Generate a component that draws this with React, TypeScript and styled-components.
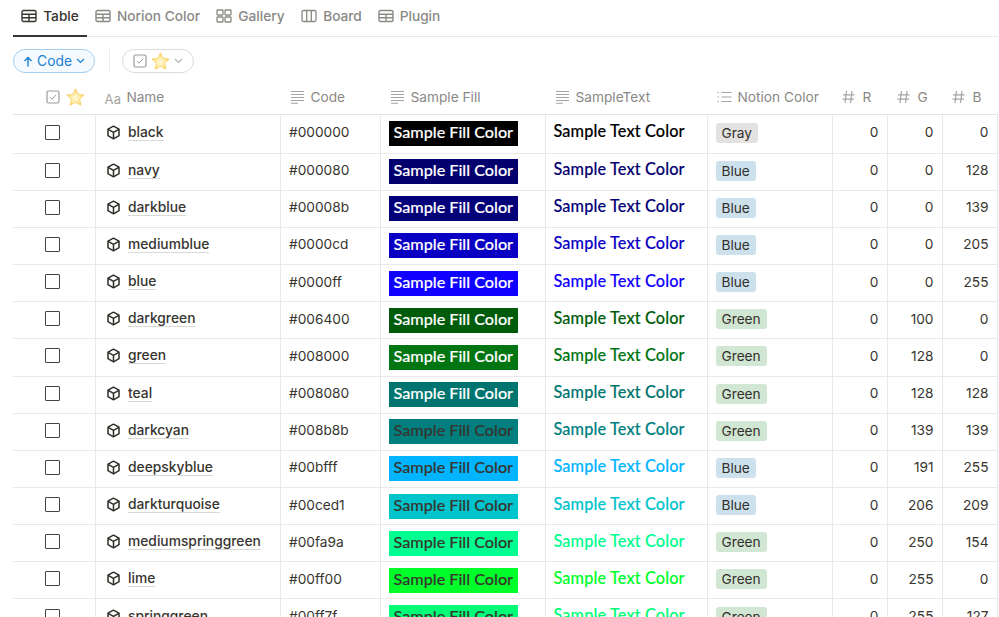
import React from 'react';
import styled, { createGlobalStyle } from 'styled-components';

const Global = createGlobalStyle`
  html, body { margin: 0; padding: 0; background: #fff; overflow: hidden; }
  body { font-family: Inter, "Liberation Sans", sans-serif; color: #37352f; }
`;
const Page = styled.div`
  width: 999px; height: 617px; overflow: hidden; padding-left: 13px; box-sizing: border-box;
`;
const Tabs = styled.div`
  display: flex; height: 37px; box-sizing: border-box; border-bottom: 1px solid #e9e9e7; width: 985px;
`;
const Tab = styled.div<{ $active?: boolean; $w: number }>`
  width: ${p => p.$w}px; box-sizing: border-box; height: 37px; display: flex; align-items: center; justify-content: center; gap: 6px;
  padding-bottom: 3px; font-size: 13.7px; font-weight: 500; color: ${p => (p.$active ? '#37352f' : '#8a8985')};
  border-bottom: ${p => (p.$active ? '2px solid #37352f' : '2px solid transparent')};
`;
const Filters = styled.div`
  display: flex; align-items: center; height: 48px;
`;
const SortPill = styled.div`
  display: flex; align-items: center; height: 24px; width: 82px; box-sizing: border-box; justify-content: center; gap: 4px;
  border: 1px solid #a6d0f2; border-radius: 12px; background: #f5fafe; color: #1a7fd4; font-size: 13.8px;
`;
const Divider = styled.div`width: 1px; height: 24px; background: #ececea; margin: 0 12px 0 14px;`;
const FilterPill = styled.div`
  display: flex; align-items: center; height: 24px; width: 72px; box-sizing: border-box; justify-content: center; gap: 4px;
  border: 1px solid #dcdcd9; border-radius: 12px;
`;
const Grid = styled.div`
  display: grid; grid-template-columns: 82.5px 185px 100px 165px 162px 125px 55px 55px 55px;
  grid-template-rows: 30px 38.6px; grid-auto-rows: 37.17px; width: 984.5px;
`;
const HeadCell = styled.div<{ $gap?: number }>`
  box-sizing: border-box; border-bottom: 1px solid #e4e4e2; display: flex; align-items: center; gap: ${p => p.$gap ?? 6}px;
  padding: 0 0 5px 9px; font-size: 13.7px; color: #8a8985; white-space: nowrap;
`;
const CheckHead = styled(HeadCell)`padding-left: 33px; gap: 6px;`;
const Cell = styled.div`
  box-sizing: border-box; border-bottom: 1px solid #e9e9e7; border-right: 1px solid #e9e9e7;
  display: flex; align-items: center; padding: 0 8px; font-size: 14px; color: #37352f; white-space: nowrap; overflow: hidden;
`;
const CheckCell = styled(Cell)`padding: 0 0 3px 32px;`;
const Box = styled.div`width: 13px; height: 13px; border: 1.5px solid #45433e; border-radius: 1px;`;
const NameCell = styled(Cell)`gap: 7.5px; padding: 0 0 3px 10px;`;
const Name = styled.span`font-weight: 500; font-size: 13.8px; border-bottom: 1px solid #d8d8d5; line-height: 16px;`;
const CodeCell = styled(Cell)`font-size: 13.7px; padding: 0 0 3px 8.5px;`;
const Fill = styled.div<{ $dark: boolean }>`
  width: 129px; height: 25px; box-sizing: border-box; padding: 0 0 4px 5px; display: flex; align-items: center;
  font-family: Lato, sans-serif; font-weight: 500; font-size: 16.2px; -webkit-text-stroke: .15px currentColor;
  color: ${p => (p.$dark ? '#fff' : '#37352f')};
`;
const SampleText = styled.span`
  font-family: Lato, sans-serif; font-weight: 500; font-size: 16.3px; letter-spacing: .12px; margin-bottom: 6px; -webkit-text-stroke: .15px currentColor;
`;
const Tag = styled.span<{ $bg: string }>`
  background: ${p => p.$bg}; border-radius: 3px; height: 20px; line-height: 20px; padding: 0 6px; font-size: 13.7px; color: #32302c; margin-bottom: 2px;
`;
const Num = styled(Cell)`justify-content: flex-end; padding: 0 8px 3px 0; font-size: 13.7px;`;
const Svg = styled.svg`flex: none; display: block;`;

const TableIcon = ({ c = '#8a8985' }: { c?: string }) => (
  <Svg width="16" height="14" viewBox="0 0 16 14" fill="none" stroke={c} strokeWidth="1.4">
    <rect x="1" y="1.5" width="14" height="11" rx="1.5" />
    <path d="M1 5.2h14M1 8.8h14M8 5.2v7.3" />
  </Svg>
);
const GalleryIcon = () => (
  <Svg width="16" height="14" viewBox="0 0 16 14" fill="none" stroke="#8a8985" strokeWidth="1.3">
    <rect x="1" y="1" width="6" height="5" rx=".8" /><rect x="9" y="1" width="6" height="5" rx=".8" />
    <rect x="1" y="8" width="6" height="5" rx=".8" /><rect x="9" y="8" width="6" height="5" rx=".8" />
  </Svg>
);
const BoardIcon = () => (
  <Svg width="16" height="14" viewBox="0 0 16 14" fill="none" stroke="#8a8985" strokeWidth="1.3">
    <rect x="1" y="1.5" width="14" height="11" rx="1.5" /><path d="M5.7 1.5v11M10.3 1.5v11" />
  </Svg>
);
const Chevron = ({ c }: { c: string }) => (
  <Svg width="9" height="6" viewBox="0 0 9 6" fill="none" stroke={c} strokeWidth="1.2"><path d="M1 1l3.5 3.5L8 1" /></Svg>
);
const Check = () => (
  <Svg width="14" height="14" viewBox="0 0 14 14" fill="none">
    <rect x="1" y="1" width="12" height="12" rx="1.5" stroke="#9b9a97" strokeWidth="1.2" />
    <path d="M4 7.2l2 2L10 4.8" stroke="#9b9a97" strokeWidth="1" />
  </Svg>
);
const Star = () => (
  <Svg width="19" height="18" viewBox="0 0 24 23">
    <defs><radialGradient id="st" cx="0.5" cy="0.55" r="0.55"><stop offset="0" stopColor="#fff9dc" /><stop offset="0.6" stopColor="#ffe99c" /><stop offset="1" stopColor="#fbce58" /></radialGradient></defs>
    <path d="M12 1l3.3 7 7.7 1-5.6 5.3 1.5 7.7L12 18.3 5.1 22l1.5-7.7L1 9l7.7-1z" fill="url(#st)" stroke="#f7cc62" strokeWidth="1" strokeLinejoin="round" />
  </Svg>
);
const TextIcon = () => (
  <Svg width="15" height="14" viewBox="0 0 15 14" stroke="#a5a4a1" strokeWidth="1.1">
    <path d="M1 1.5h13M1 4.5h13M1 7.5h13M1 10.5h13M1 13.2h7" />
  </Svg>
);
const ListIcon = () => (
  <Svg width="15" height="12" viewBox="0 0 15 12" stroke="#a5a4a1" strokeWidth="1.1">
    <path d="M4.5 1.5h10M4.5 6h10M4.5 10.5h10M.5 1.5H2M.5 6H2M.5 10.5H2" />
  </Svg>
);
const HashIcon = () => (
  <Svg width="13" height="14" viewBox="0 0 13 14" fill="none" stroke="#a5a4a1" strokeWidth="1.2">
    <path d="M4.5 1L3 13M10 1L8.5 13M1 4.8h11.5M.5 9.2H12" />
  </Svg>
);
const Cube = () => (
  <Svg width="15" height="15" viewBox="0 0 15 15" fill="none" stroke="#2f2d28" strokeWidth="1.5" strokeLinejoin="round">
    <path d="M7.5 1.2L13 4.2V10.700L7.500 13.800L2 10.700V4.200Z" />
    <path d="M2.2 4.4L7.500 7.400L12.800 4.400M7.500 7.400V13.600" />
  </Svg>
);
const AaLabel = styled.span`font-size: 13px; color: #a5a4a1; letter-spacing: .3px; padding-top: 3px;`;
const UpArrow = () => (
  <Svg width="10" height="11" viewBox="0 0 10 11" fill="none" stroke="#1a7fd4" strokeWidth="1.4"><path d="M5 10.500V1.500M1.500 5L5 1.500L8.500 5" /></Svg>
);

type Row = { name: string; code: string; shown: string; tag: string; r: number; g: number; b: number; dark?: boolean };
const rows: Row[] = [
  { name: 'black', code: '#000000', shown: '#000000', tag: 'Gray', r: 0, g: 0, b: 0, dark: true },
  { name: 'navy', code: '#000080', shown: '#03006e', tag: 'Blue', r: 0, g: 0, b: 128, dark: true },
  { name: 'darkblue', code: '#00008b', shown: '#040079', tag: 'Blue', r: 0, g: 0, b: 139, dark: true },
  { name: 'mediumblue', code: '#0000cd', shown: '#0a00c3', tag: 'Blue', r: 0, g: 0, b: 205, dark: true },
  { name: 'blue', code: '#0000ff', shown: '#1000ff', tag: 'Blue', r: 0, g: 0, b: 255, dark: true },
  { name: 'darkgreen', code: '#006400', shown: '#005c0a', tag: 'Green', r: 0, g: 100, b: 0, dark: true },
  { name: 'green', code: '#008000', shown: '#007512', tag: 'Green', r: 0, g: 128, b: 0, dark: true },
  { name: 'teal', code: '#008080', shown: '#00756f', tag: 'Green', r: 0, g: 128, b: 128, dark: true },
  { name: 'darkcyan', code: '#008b8b', shown: '#007f7f', tag: 'Green', r: 0, g: 139, b: 139 },
  { name: 'deepskyblue', code: '#00bfff', shown: '#00b4ff', tag: 'Blue', r: 0, g: 191, b: 255 },
  { name: 'darkturquoise', code: '#00ced1', shown: '#00c4cc', tag: 'Blue', r: 0, g: 206, b: 209 },
  { name: 'mediumspringgreen', code: '#00fa9a', shown: '#00ff90', tag: 'Green', r: 0, g: 250, b: 154 },
  { name: 'lime', code: '#00ff00', shown: '#00ff2a', tag: 'Green', r: 0, g: 255, b: 0 },
  { name: 'springgreen', code: '#00ff7f', shown: '#00ff76', tag: 'Green', r: 0, g: 255, b: 127 },
];
const tagBg: Record<string, string> = { Gray: '#e3e2e0', Blue: '#cde1ed', Green: '#d2e6d4' };

export default function App() {
  return (
    <Page>
      <Global />
      <Tabs>
        <Tab $active $w={74}><TableIcon c="#37352f" />Table</Tab>
        <Tab $w={121}><TableIcon />Norion Color</Tab>
        <Tab $w={85}><GalleryIcon />Gallery</Tab>
        <Tab $w={77}><BoardIcon />Board</Tab>
        <Tab $w={78}><TableIcon />Plugin</Tab>
      </Tabs>
      <Filters>
        <SortPill><UpArrow />Code<Chevron c="#1a7fd4" /></SortPill>
        <Divider />
        <FilterPill><Check /><Star /><Chevron c="#b5b4b1" /></FilterPill>
      </Filters>
      <Grid>
        <CheckHead><Check /><Star /></CheckHead>
        <HeadCell $gap={5}><AaLabel>Aa</AaLabel>Name</HeadCell>
        <HeadCell><TextIcon />Code</HeadCell>
        <HeadCell><TextIcon />Sample Fill</HeadCell>
        <HeadCell><TextIcon />SampleText</HeadCell>
        <HeadCell><ListIcon />Notion Color</HeadCell>
        <HeadCell $gap={8}><HashIcon />R</HeadCell>
        <HeadCell $gap={8}><HashIcon />G</HeadCell>
        <HeadCell $gap={8}><HashIcon />B</HeadCell>
        {rows.map(r => (
          <React.Fragment key={r.name}>
            <CheckCell><Box /></CheckCell>
            <NameCell><Cube /><Name>{r.name}</Name></NameCell>
            <CodeCell>{r.code}</CodeCell>
            <Cell><Fill $dark={!!r.dark} style={{ background: r.shown }}>Sample Fill Color</Fill></Cell>
            <Cell><SampleText style={{ color: r.shown }}>Sample Text Color</SampleText></Cell>
            <Cell><Tag $bg={tagBg[r.tag]}>{r.tag}</Tag></Cell>
            <Num>{r.r}</Num>
            <Num>{r.g}</Num>
            <Num>{r.b}</Num>
          </React.Fragment>
        ))}
      </Grid>
    </Page>
  );
}
